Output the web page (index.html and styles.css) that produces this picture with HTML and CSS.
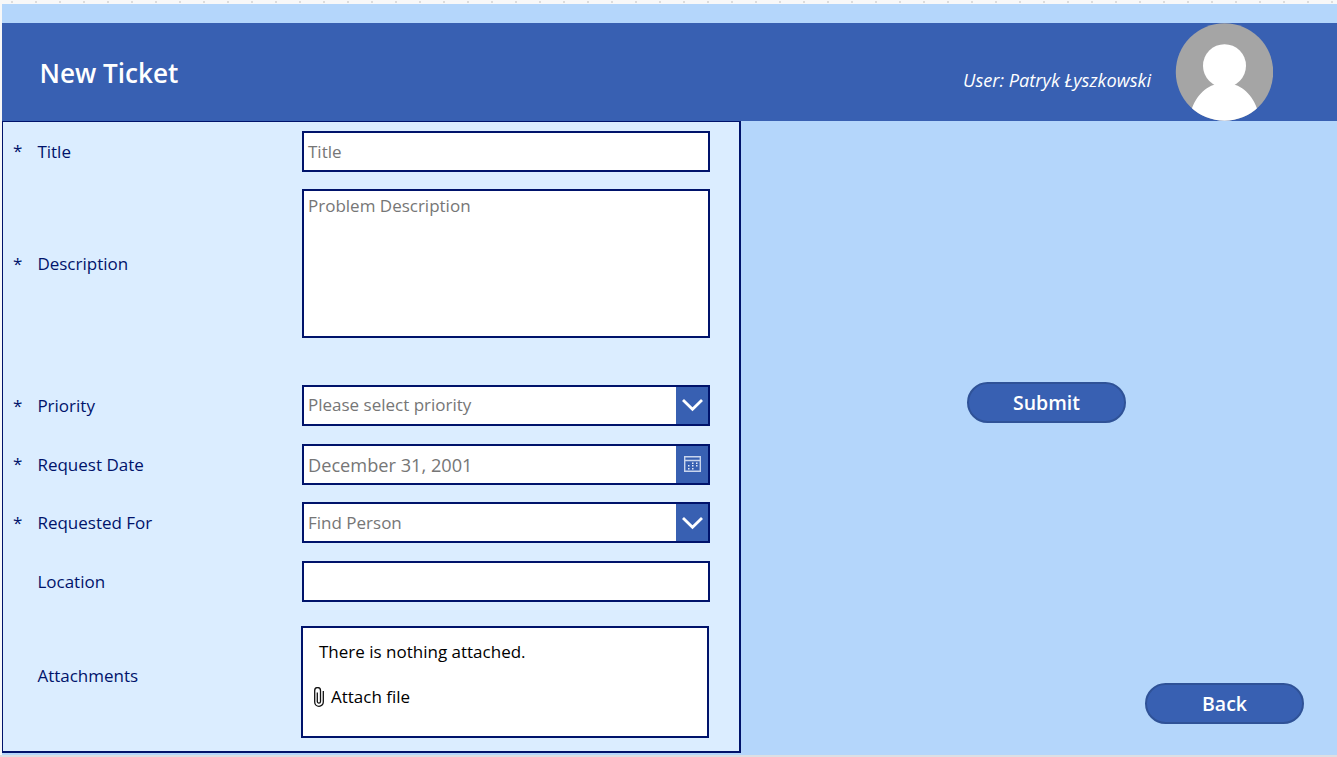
FILE: index.html
```html
<!DOCTYPE html>
<html lang="en">
<head>
<meta charset="utf-8">
<title>New Ticket</title>
<link rel="stylesheet" href="styles.css">
</head>
<body>
<div class="app">
  <header class="header">
    <h1 class="header-title">New Ticket</h1>
    <span class="user">User: Patryk Łyszkowski</span>
    <svg class="avatar" viewBox="0 0 98 98">
      <defs><clipPath id="round"><circle cx="49.500" cy="49" r="48.700"/></clipPath></defs>
      <g clip-path="url(#round)">
        <rect width="98.500" height="98" fill="#a5a5a5"/>
        <circle cx="49.500" cy="42.700" r="21.500" fill="#fff"/>
        <path d="M14.500 98C15.500 80 26.500 66 38.500 62C40.500 61 39.500 60 38.500 59H60.500C59.500 60 58.500 61 60.500 62C72.500 66 83.500 80 84.500 98Z" fill="#fff"/>
      </g>
    </svg>
  </header>
  <main class="content">
    <form class="form">
      <div class="row row-title">
        <span class="star">*</span><label class="label">Title</label>
        <div class="field"><span class="hint">Title</span></div>
      </div>
      <div class="row row-description">
        <span class="star">*</span><label class="label">Description</label>
        <div class="field field-area"><span class="hint">Problem Description</span></div>
      </div>
      <div class="row row-priority">
        <span class="star">*</span><label class="label">Priority</label>
        <div class="field"><span class="hint">Please select priority</span>
          <span class="picker"><svg width="22" height="14" viewBox="0 0 22 14"><path d="M2 2L11.500 11.300L21 2" fill="none" stroke="#fff" stroke-width="2.800"/></svg></span>
        </div>
      </div>
      <div class="row row-date">
        <span class="star">*</span><label class="label">Request Date</label>
        <div class="field"><span class="hint hint-date">December 31, 2001</span>
          <span class="picker"><svg width="17" height="16" viewBox="0 0 17 16"><path d="M.7 .7H16.300V15.300H.7ZM.7 4.500H16.300" fill="none" stroke="#c9d5ed" stroke-width="1.400"/><path d="M8 6.500h1.500v1.500H8zM12 6.500h1.500v1.500H12zM4 9h1.500v1.500H4zM8 9h1.500v1.500H8zM12 9h1.500v1.500H12zM4 12h1.500v1.500H4zM8 12h1.500v1.500H8z" fill="#e4eaf6"/></svg></span>
        </div>
      </div>
      <div class="row row-person">
        <span class="star">*</span><label class="label">Requested For</label>
        <div class="field"><span class="hint">Find Person</span>
          <span class="picker"><svg width="22" height="14" viewBox="0 0 22 14"><path d="M2 2L11.500 11.300L21 2" fill="none" stroke="#fff" stroke-width="2.800"/></svg></span>
        </div>
      </div>
      <div class="row row-location">
        <span class="star"></span><label class="label">Location</label>
        <div class="field"></div>
      </div>
      <div class="row row-files">
        <span class="star"></span><label class="label">Attachments</label>
        <div class="field field-files">
          <span class="files-empty">There is nothing attached.</span>
          <span class="files-add"><svg width="10" height="20" viewBox="0 0 10 20"><path d="M9.300 4V15A4.300 4.300 0 0 1 .7 15V3.500A2.800 2.800 0 0 1 6.500 3.500V14.500A1.600 1.600 0 0 1 3.300 14.500V5.500" fill="none" stroke="#111" stroke-width="1.300"/></svg>Attach file</span>
        </div>
      </div>
    </form>
    <aside class="actions">
      <button class="button button-submit" type="button">Submit</button>
      <button class="button button-back" type="button">Back</button>
    </aside>
  </main>
</div>
</body>
</html>
```
FILE: styles.css
```css
* { box-sizing: border-box; }
body {
  margin: 0;
  height: 757px;
  overflow: hidden;
  padding: 4px 0 0 2px;
  background: linear-gradient(#dcdfe3, #dcdfe3) 0 755px / 100% 2px no-repeat,
    conic-gradient(from 90deg at 22px 0, #dcdcdc 90deg, transparent 0) -11px 1px / 24px 2px repeat-x, #f8f8f8;
  font: 17px/24px "Open Sans", sans-serif;
  color: #00136b;
}
.app {
  height: 751px;
  padding-top: 19px;
  background: #b4d6fb;
}
.header {
  display: flex;
  align-items: center;
  height: 98px;
  padding: 0 64px 0 37.500px;
  background: #3860b2;
  color: #fff;
}
.header-title { margin: 1px 0 0; font-size: 26.100px; line-height: 36px; font-weight: 600; }
.user { margin: 15px 24px 0 auto; font-size: 18.200px; font-style: italic; }
.avatar { width: 98px; height: 98px; }
.content { display: flex; height: 632px; }
.form {
  width: 739px;
  height: 632px;
  padding-right: 29px;
  border: solid #00136b;
  border-width: 1px 2px 2px 1px;
  background: #dbedff;
}
.row { display: flex; align-items: center; height: 41px; }
.star { width: 24px; margin-left: 10px; }
.label { width: 265px; padding-left: 0.4px; }
.field {
  display: flex;
  align-items: center;
  width: 408px;
  height: 100%;
  padding-left: 4px;
  border: 2px solid #00136b;
  background: #fff;
}
.row-title { margin-top: 8.500px; }
.row-title .label, .row-title .hint { padding-top: 1px; }
.row-description { margin-top: 17.500px; height: 149px; }
.row-priority { margin-top: 47px; }
.row-priority .hint { padding-bottom: 2px; }
.row-date { margin-top: 18px; }
.row-date .star { padding-bottom: 1px; }
.row-person { margin-top: 17px; }
.row-person .label, .row-person .star { padding-top: 1px; }
.row-location { margin-top: 18px; }
.row-files { margin-top: 24px; height: 112px; }
.hint { color: #767676; }
.hint-date { font-size: 18.200px; }
.field-area { align-items: flex-start; padding-top: 3px; }
.picker {
  display: flex;
  align-items: center;
  justify-content: center;
  width: 32px;
  height: 37px;
  margin-left: auto;
  background: #3860b2;
}
.row-date .picker { padding-bottom: 1px; }
.row-priority .picker { padding-bottom: 1px; }
.row-files .label { width: 264px; padding-bottom: 13px; }
.field-files {
  flex-direction: column;
  align-items: flex-start;
  gap: 21px;
  padding: 12px 0 0 11px;
  color: #000;
}
.files-empty { padding-left: 5px; }
.files-add { display: flex; align-items: center; gap: 7px; }
.actions { display: flex; flex: 1; flex-direction: column; padding: 261px 33px 29px 226px; }
.button {
  width: 159px;
  height: 41px;
  padding: 0;
  border: 2px solid #2f5297;
  border-radius: 20.500px;
  background: #3860b2;
  color: #fff;
  font: 600 19.500px/24px "Open Sans", sans-serif;
}
.button-back { margin-top: auto; align-self: flex-end; }
```
